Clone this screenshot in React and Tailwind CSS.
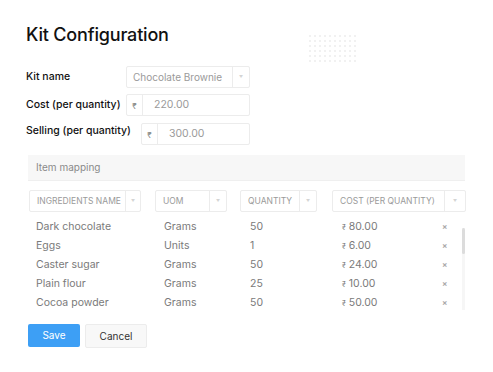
// Kit configuration form: kit details, item mapping table, save/cancel.
const rows = [
  { name: 'Dark chocolate', uom: 'Grams', qty: '50', cost: '80.00' },
  { name: 'Eggs', uom: 'Units', qty: '1', cost: '6.00' },
  { name: 'Caster sugar', uom: 'Grams', qty: '50', cost: '24.00' },
  { name: 'Plain flour', uom: 'Grams', qty: '25', cost: '10.00' },
  { name: 'Cocoa powder', uom: 'Grams', qty: '50', cost: '50.00' },
]

function Caret() {
  return <span className="text-[4px] leading-none text-[#d4d4d4]">▼</span>
}

function HeaderSelect({ label, width, caretWidth }) {
  return (
    <div className={`flex h-[22px] items-center rounded-[2px] border border-[#ececec] bg-white ${width}`}>
      <span className="flex-1 overflow-hidden whitespace-nowrap pl-[7px] text-[8.5px] text-[#9a9a9a]">{label}</span>
      <span className={`flex h-full shrink-0 items-center justify-center border-l border-[#ececec] ${caretWidth}`}>
        <Caret />
      </span>
    </div>
  )
}

function MoneyInput({ value, width }) {
  return (
    <div className={`flex h-[22px] items-center rounded-[2px] border border-[#ececec] ${width}`}>
      <span className="flex h-full w-[16px] items-center justify-center border-r border-[#ececec] pt-[2px] text-[8px] text-[#888]">₹</span>
      <span className="pl-[11px] text-[10.5px] text-[#9a9a9a]">{value}</span>
    </div>
  )
}

function Dots() {
  const dots = []
  for (let r = 0; r < 6; r++) {
    for (let c = 0; c < 10; c++) {
      dots.push(<circle key={`${r}-${c}`} cx={2 + c * 5} cy={2 + r * 5} r="0.7" fill="#d9d9d9" />)
    }
  }
  return (
    <svg width="50" height="30" className="absolute left-[308px] top-[34px]">
      {dots}
    </svg>
  )
}

export default function App() {
  return (
    <div className="relative h-[372px] w-[493px] bg-white font-['Inter','Liberation_Sans',sans-serif] text-[#111]">
      <Dots />

      <div className="pl-[26px] pt-[24px]">
        {/* Title */}
        <h1 className="text-[18px] font-medium leading-[22px] tracking-[-0.01em]">Kit Configuration</h1>

        {/* Kit fields */}
        <div className="mt-[20px] flex items-center">
          <span className="w-[100px] text-[10.5px] font-medium">Kit name</span>
          <div className="flex h-[22px] w-[124px] items-center rounded-[2px] border border-[#ececec]">
            <span className="flex-1 pl-[6px] text-[10px] text-[#9a9a9a]">Chocolate Brownie</span>
            <span className="flex h-full w-[17px] items-center justify-center border-l border-[#ececec]">
              <Caret />
            </span>
          </div>
        </div>

        <div className="mt-[6px] flex items-center">
          <span className="w-[100px] text-[10.5px] font-medium">Cost (per quantity)</span>
          <MoneyInput value="220.00" width="w-[124px]" />
        </div>

        <div className="mt-[7px] flex items-center">
          <span className="-mt-[6px] w-[115px] text-[10.5px] font-medium">Selling (per quantity)</span>
          <MoneyInput value="300.00" width="w-[109px]" />
        </div>

        {/* Item mapping */}
        <div className="mt-[10px] ml-[2px] w-[437px]">
          <div className="flex h-[26px] items-center border-b border-[#efefef] bg-[#f7f7f7] pl-[8px] text-[10px] text-[#8a8a8a]">
            Item mapping
          </div>

          <div className="mt-[9px] flex items-center">
            <div className="ml-[1px]"><HeaderSelect label="INGREDIENTS NAME" width="w-[112px]" caretWidth="w-[15px]" /></div>
            <div className="ml-[14px]"><HeaderSelect label="UOM" width="w-[72px]" caretWidth="w-[17px]" /></div>
            <div className="ml-[13px]"><HeaderSelect label="QUANTITY" width="w-[77px]" caretWidth="w-[17px]" /></div>
            <div className="ml-[15px]"><HeaderSelect label="COST (PER QUANTITY)" width="w-[134px]" caretWidth="w-[21px]" /></div>
          </div>

          {/* Rows, clipped as a scroll area */}
          <div className="relative mt-[5px] h-[95px] overflow-hidden">
            {rows.map((r) => (
              <div key={r.name} className="flex h-[19px] items-center text-[10.5px] text-[#7a7a7a]">
                <span className="w-[136px] pl-[8px]">{r.name}</span>
                <span className="w-[86px]">{r.uom}</span>
                <span className="w-[92px]">{r.qty}</span>
                <span className="w-[100px]">
                  <span className="text-[7px]">₹</span> {r.cost}
                </span>
                <span className="text-[8px] font-bold text-[#aaa]">×</span>
              </div>
            ))}
            {/* Scrollbar */}
            <div className="absolute right-[0px] top-[11px] h-[82px] w-[3px] bg-[#f6f6f6]">
              <div className="h-[26px] w-full rounded-full bg-[#dcdcdc]" />
            </div>
          </div>
        </div>

        {/* Actions */}
        <div className="mt-[12px] ml-[2px] flex gap-[5px]">
          <button className="h-[23px] w-[52px] rounded-[2px] bg-[#3d9ff5] text-[10px] text-white">Save</button>
          <button className="h-[24px] w-[62px] rounded-[2px] border border-[#ececec] bg-[#f8f8f8] text-[10px] text-[#333]">Cancel</button>
        </div>
      </div>
    </div>
  )
}
